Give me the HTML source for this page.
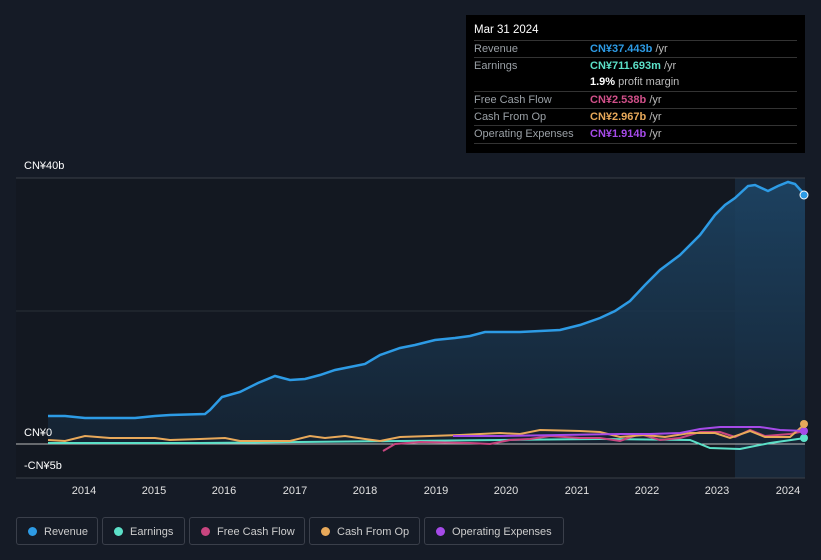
<!DOCTYPE html>
<html><head><meta charset="utf-8"><style>
body{margin:0;width:821px;height:560px;background:#151b26;font-family:"Liberation Sans",sans-serif;overflow:hidden;position:relative}
.tt{position:absolute;left:466px;top:15px;width:339px;height:138px;background:#000;color:#fff;font-size:11px}
.tt .h{position:absolute;left:8px;top:9px;font-size:11.5px}
.row{position:absolute;left:8px;width:323px;border-top:1px solid #333;height:17px;line-height:17px;color:#9aa0a6}
.row b{position:absolute;left:116px;font-weight:bold}
.row span.u{color:#bbb;font-weight:normal}
.lab{position:absolute;color:#fff;font-size:11px}
.yr{position:absolute;top:485px;color:#e0e0e0;font-size:11px;transform:translateX(-50%)}
.leg{position:absolute;top:517px;height:28px;border:1px solid #3a3f4a;border-radius:3px;color:#ccc;font-size:11px;line-height:28px;box-sizing:border-box;padding-left:27px}
.leg i{position:absolute;left:11px;top:9px;width:9px;height:9px;border-radius:50%}
</style></head><body>
<svg width="821" height="560" style="position:absolute;left:0;top:0">
<defs><linearGradient id="g" x1="0" y1="0" x2="0" y2="1"><stop offset="0" stop-color="#1d4566"/><stop offset="1" stop-color="#152434"/></linearGradient></defs>
<rect x="16" y="178" width="789" height="300" fill="#131821"/>
<rect x="735" y="178" width="70" height="300" fill="#18283a"/>
<line x1="16" y1="178" x2="805" y2="178" stroke="#3a3f48"/>
<line x1="16" y1="311" x2="805" y2="311" stroke="#2a2f38"/>
<line x1="16" y1="478" x2="805" y2="478" stroke="#3a3f48"/>
<path d="M48,416 L65,416 85,418 135,418 155,416 170,415 205,414 210,410 222,397 240,392 258,383 275,376 290,380 305,379 320,375 335,370 350,367 365,364 380,355 400,348 415,345 435,340 455,338 470,336 485,332 500,332 520,332 540,331 560,330 580,325 600,318 615,311 630,301 645,285 660,270 680,255 700,235 715,215 725,205 735,198 748,186 755,185 768,191 778,186 788,182 795,184 805,195 L805,444 L48,444Z" fill="url(#g)" opacity="0.85"/>
<path d="M48,416 L65,416 85,418 135,418 155,416 170,415 205,414 210,410 222,397 240,392 258,383 275,376 290,380 305,379 320,375 335,370 350,367 365,364 380,355 400,348 415,345 435,340 455,338 470,336 485,332 500,332 520,332 540,331 560,330 580,325 600,318 615,311 630,301 645,285 660,270 680,255 700,235 715,215 725,205 735,198 748,186 755,185 768,191 778,186 788,182 795,184 805,195" fill="none" stroke="#2d9be5" stroke-width="2.5"/>
<line x1="16" y1="444" x2="805" y2="444" stroke="#bbb" stroke-width="1"/>
<path d="M48,443 L200,443 300,442 400,441 500,440 600,439 690,440 710,448 740,449 770,443 805,438" fill="none" stroke="#5ce0c8" stroke-width="2"/>
<path d="M383,451 L395,444 420,442 470,443 490,444 510,440 530,439 550,436 580,438 600,438 620,441 640,434 660,440 680,438 700,432 720,432 735,437 750,430 765,436 790,434 805,431" fill="none" stroke="#c8457f" stroke-width="2"/>
<path d="M48,440 L65,441 85,436 110,438 155,438 170,440 200,439 225,438 240,441 290,441 310,436 325,438 345,436 365,439 380,441 400,437 430,436 460,435 500,433 520,434 540,430 580,431 600,432 620,437 645,435 665,437 690,433 715,433 730,438 750,431 765,437 790,437 805,424" fill="none" stroke="#e8a95a" stroke-width="2"/>
<path d="M453,436 L500,436 560,435 620,434 650,434 680,433 700,429 720,427 760,427 780,430 805,431" fill="none" stroke="#a54ae8" stroke-width="2"/>
<circle cx="804" cy="195" r="4" fill="#2d9be5" stroke="#fff" stroke-width="1"/>
<circle cx="804" cy="438" r="4" fill="#5ce0c8"/>
<circle cx="804" cy="431" r="4" fill="#a54ae8"/>
<circle cx="804" cy="424" r="4" fill="#e8a95a"/>
</svg>
<div class="lab" style="left:24px;top:160px">CN¥40b</div>
<div class="lab" style="left:24px;top:427px">CN¥0</div>
<div class="lab" style="left:24px;top:460px">-CN¥5b</div>
<div class="yr" style="left:84px">2014</div><div class="yr" style="left:154px">2015</div><div class="yr" style="left:224px">2016</div><div class="yr" style="left:295px">2017</div><div class="yr" style="left:365px">2018</div><div class="yr" style="left:436px">2019</div><div class="yr" style="left:506px">2020</div><div class="yr" style="left:577px">2021</div><div class="yr" style="left:647px">2022</div><div class="yr" style="left:717px">2023</div><div class="yr" style="left:788px">2024</div>
<div class="tt"><div class="h">Mar 31 2024</div>
<div class="row" style="top:25px">Revenue<b style="color:#2d9be5">CN¥37.443b <span class="u">/yr</span></b></div>
<div class="row" style="top:42px">Earnings<b style="color:#5ce0c8">CN¥711.693m <span class="u">/yr</span></b></div>
<div class="row" style="top:59px;border-top:none"><b style="color:#fff">1.9% <span class="u">profit margin</span></b></div>
<div class="row" style="top:76px">Free Cash Flow<b style="color:#d2508a">CN¥2.538b <span class="u">/yr</span></b></div>
<div class="row" style="top:93px">Cash From Op<b style="color:#e8a95a">CN¥2.967b <span class="u">/yr</span></b></div>
<div class="row" style="top:110px">Operating Expenses<b style="color:#a54ae8">CN¥1.914b <span class="u">/yr</span></b></div>
<div class="row" style="top:128px;height:0"></div>
</div>
<div class="leg" style="left:16px;width:82px"><i style="background:#2d9be5"></i>Revenue</div>
<div class="leg" style="left:102px;width:83px"><i style="background:#5ce0c8"></i>Earnings</div>
<div class="leg" style="left:189px;width:116px"><i style="background:#c8457f"></i>Free Cash Flow</div>
<div class="leg" style="left:309px;width:111px"><i style="background:#e8a95a"></i>Cash From Op</div>
<div class="leg" style="left:424px;width:140px"><i style="background:#a54ae8"></i>Operating Expenses</div>
</body></html>
